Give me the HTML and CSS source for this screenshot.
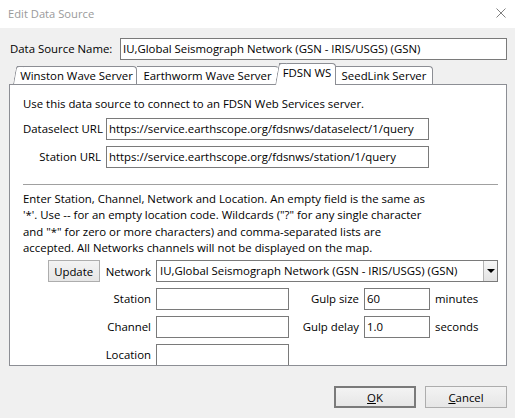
FILE: index.html
```
<!DOCTYPE html>
<html lang="en">
<head>
    <meta charset="UTF-8">
    <title>Edit Data Source</title>
    <link rel="stylesheet" href="styles.css">
</head>
<body>
    <div class="window">
        <!-- title bar -->
        <div class="titlebar">
            <span class="title">Edit Data Source</span>
            <svg class="close" width="10" height="10" viewBox="0 0 10 10">
                <path d="M0.5 0.5L9.5 9.5M9.5 0.5L0.5 9.5" stroke="#808080" stroke-width="1" fill="none"/>
            </svg>
        </div>

        <div class="content">
            <div class="name-row">
                <span class="name-label">Data Source Name:</span>
                <div class="field name-field">IU,Global Seismograph Network (GSN - IRIS/USGS) (GSN)</div>
            </div>

            <!-- tabs -->
            <div class="tabs">
                <div class="tab first tab-winston">Winston Wave Server</div>
                <div class="tab tab-earthworm">Earthworm Wave Server</div>
                <div class="tab active tab-fdsn">FDSN WS</div>
                <div class="tab tab-seedlink">SeedLink Server</div>
            </div>

            <div class="panel">
                <p class="intro">Use this data source to connect to an FDSN Web Services server.</p>
                <div class="url-grid">
                    <span class="label">Dataselect URL</span>
                    <div class="field">https://service.earthscope.org/fdsnws/dataselect/1/query</div>
                    <span class="label">Station URL</span>
                    <div class="field">https://service.earthscope.org/fdsnws/station/1/query</div>
                </div>
                <div class="sep"></div>
                <p class="help">Enter Station, Channel, Network and Location. An empty field is the same as<br>'*'. Use -- for an empty location code. Wildcards ("?" for any single character<br>and "*" for zero or more characters) and comma-separated lists are<br>accepted. All Networks channels will not be displayed on the map.</p>

                <div class="form-grid">
                    <div class="lead">
                        <button class="btn update">Update</button>
                        <span>Network</span>
                    </div>
                    <div class="combo">
                        <span class="combo-text">IU,Global Seismograph Network (GSN - IRIS/USGS) (GSN)</span>
                        <span class="combo-arrow"><i class="caret"></i></span>
                    </div>

                    <span class="label">Station</span>
                    <div class="field"></div>
                    <span class="label">Gulp size</span>
                    <div class="field">60</div>
                    <span class="unit">minutes</span>

                    <span class="label">Channel</span>
                    <div class="field"></div>
                    <span class="label">Gulp delay</span>
                    <div class="field">1.0</div>
                    <span class="unit">seconds</span>

                    <span class="label">Location</span>
                    <div class="field"></div>
                </div>
            </div>

            <!-- bottom buttons -->
            <div class="actions">
                <button class="btn default"><u>O</u>K</button>
                <button class="btn"><u>C</u>ancel</button>
            </div>
        </div>
    </div>
</body>
</html>
```

FILE: styles.css
```
* {
    box-sizing: border-box;
}

body {
    margin: 0;
    font-family: "Open Sans", "Noto Sans", sans-serif;
    font-size: 11.4px;
    color: #000;
}

.window {
    width: 515px;
    height: 418px;
    background: #f0f0f0;
    overflow: hidden;
}

.titlebar {
    height: 28px;
    background: #fff;
    display: flex;
    align-items: center;
    justify-content: space-between;
    padding: 0 9px 2px 8px;
}

.titlebar .title {
    font-size: 11.2px;
    color: #9a9a9a;
}

.content {
    padding: 10px 8px 0 9px;
}

.name-row {
    display: flex;
    height: 22px;
    padding-left: 1px;
}

.name-label {
    width: 110px;
    line-height: 22px;
}

.field {
    height: 22px;
    line-height: 20px;
    border: 1px solid #7a7a7a;
    background: #fff;
    padding: 0 2px;
    white-space: nowrap;
    overflow: hidden;
}

.name-field {
    flex: 1;
}

/* tabs */
.tabs {
    display: flex;
    align-items: flex-end;
    height: 21px;
    margin-top: 3px;
    padding-left: 8px;
}

.tab {
    position: relative;
    z-index: 1;
    height: 18px;
    line-height: 17px;
    text-align: center;
    white-space: nowrap;
    background: #fff;
    border-top: 1px solid #8c8e94;
    border-right: 1px solid #8c8e94;
    border-top-right-radius: 4px;
}

/* slanted left edge, under the label */
.tab.first::before,
.tab.active::before {
    content: "";
    position: absolute;
    z-index: -1;
    top: -1px;
    bottom: 0;
    left: -4px;
    width: 7px;
    background: #fff;
    border-left: 1px solid #8c8e94;
    border-top: 1px solid #8c8e94;
    border-top-left-radius: 3px;
    transform: skewX(-10deg);
    transform-origin: bottom left;
}

.tab.active {
    z-index: 2;
    height: 22px;
    margin-bottom: -1px;
    padding-bottom: 4px;
}

.tab-winston { width: 120px; }
.tab-earthworm { width: 142px; border-right-color: transparent; }
.tab-fdsn { width: 57px; }
.tab-seedlink { width: 97px; }

/* panel */
.panel {
    position: relative;
    height: 282px;
    background: #fff;
    border: 1px solid #8c8e94;
    padding: 11px 8px 0 13px;
    overflow: hidden;
}

.intro {
    margin: 0;
    line-height: 16px;
}

.url-grid {
    display: grid;
    grid-template-columns: 78px 323px;
    column-gap: 5px;
    row-gap: 6px;
    margin-top: 6px;
}

.label {
    text-align: right;
    line-height: 22px;
    white-space: nowrap;
}

.sep {
    height: 1px;
    background: #a0a0a0;
    margin-top: 16px;
}

.help {
    margin: 6px 0 0;
    line-height: 16.3px;
    white-space: nowrap;
}

.form-grid {
    display: grid;
    grid-template-columns: 128px 133px 65px 66px 63px;
    grid-auto-rows: 22px;
    column-gap: 5px;
    row-gap: 6px;
    margin-top: 4px;
}

.lead {
    display: flex;
    justify-content: flex-end;
    align-items: center;
    gap: 6px;
}

.unit {
    line-height: 22px;
}

.combo {
    grid-column: 2 / 6;
    display: flex;
    border: 1px solid #7a7a7a;
    background: #fff;
}

.combo-text {
    flex: 1;
    line-height: 20px;
    padding-left: 3px;
    white-space: nowrap;
    overflow: hidden;
}

.combo-arrow {
    width: 14px;
    border-left: 1px solid #b4b4b4;
    background: linear-gradient(#f7f7f7, #e3e3e3);
    display: flex;
    align-items: center;
    justify-content: center;
}

.caret {
    width: 0;
    height: 0;
    border-left: 4px solid transparent;
    border-right: 4px solid transparent;
    border-top: 4px solid #000;
}

/* buttons */
.btn {
    height: 22px;
    padding: 0;
    font-family: inherit;
    font-size: 11.4px;
    color: #000;
    border: 1px solid #adadad;
    background: linear-gradient(#f3f3f3, #e6e6e6);
}

.btn.update {
    width: 52px;
}

.actions {
    display: flex;
    justify-content: flex-end;
    gap: 9px;
    margin-top: 20px;
}

.actions .btn {
    width: 82px;
}

.btn.default {
    border: 2px solid #7a7a7a;
}
```
